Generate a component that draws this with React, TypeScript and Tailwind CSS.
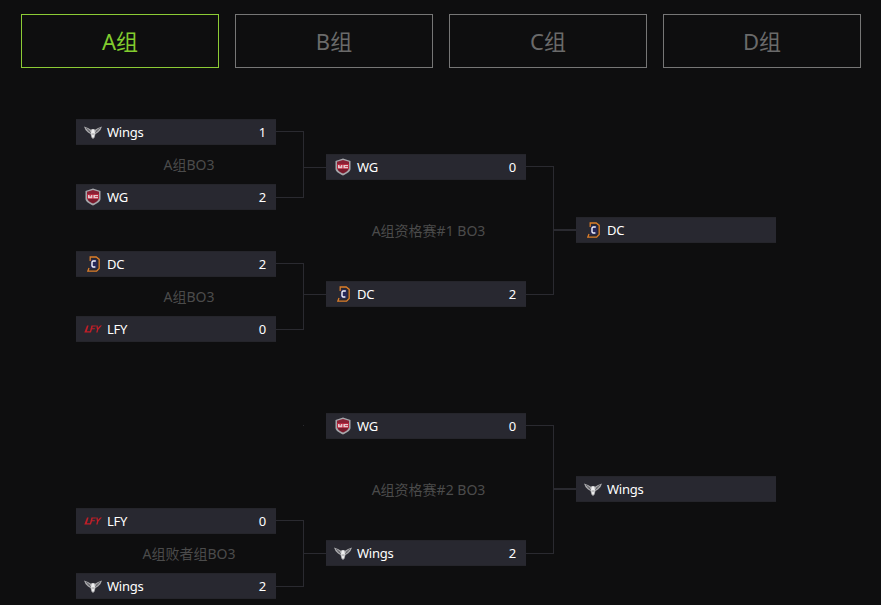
const FONT = "font-['Noto_Sans','Noto_Sans_CJK_SC',sans-serif]";

function WingsLogo() {
  return (
    <svg width="18" height="13" viewBox="0 0 18 13">
      <path d="M0 0.5 L4 2 L7 3.8 L8 3 H10 L11 3.8 L14 2 L18 0.5 L16.5 4 L14 6.5 L11.5 8 L10.6 11.5 L9 13 L7.4 11.5 L6.5 8 L4 6.5 L1.5 4 Z" fill="#a9a9ac" />
      <path d="M2 2 L6 5.2 M3.5 4 L6.8 6.6 M16 2 L12 5.2 M14.5 4 L11.2 6.6" stroke="#56565b" strokeWidth="0.8" fill="none" />
      <path d="M7.8 3.6 H10.2 L10.8 6.5 L10 10.5 L9 12 L8 10.5 L7.2 6.5 Z" fill="#efeff0" />
      <path d="M8.2 7.5 H9.8 L9 9.5 Z" fill="#77777b" />
    </svg>
  );
}

function WgLogo() {
  return (
    <svg width="16" height="18" viewBox="0 0 16 18">
      <path d="M0.5 3 L8 0.5 L15.5 3 V11 C15.5 14 11 16 8 17.5 C5 16 0.5 14 0.5 11 Z" fill="#a6a6aa" />
      <path d="M2 3.8 L8 1.9 L14 3.8 V6 H2 Z" fill="#8a2034" />
      <path d="M2 6 H14 V11 H2 Z" fill="#b9283f" />
      <path d="M2.4 11 H13.6 C13 13 10.2 14.6 8 15.6 C5.8 14.6 3 13 2.4 11 Z" fill="#7a1a2c" />
      <path d="M3 7 H7.4 V10.2 H3 Z M8.4 7 H13 V10.2 H8.4 Z" fill="#e6c9cf" />
      <path d="M4.6 7 H5.8 V8.6 H4.6 Z M10 8 H13 V8.8 H10 Z" fill="#b9283f" />
    </svg>
  );
}

function DcLogo() {
  return (
    <svg width="13" height="16" viewBox="0 0 13 16">
      <path d="M3.2 5 V1 H9.2 L12.2 3.4 V12.4 L9.6 15.2 H0.8 L2 12" fill="none" stroke="#dc7d28" strokeWidth="1.3" />
      <path d="M4 3.4 H9 L10.2 4.4 V11.4 L9 12.6 H3 Z" fill="#27275a" />
      <path d="M8.8 5 H6 L5 6 V10 L6 11 H8.4" fill="none" stroke="#f2f2fb" strokeWidth="1.4" />
    </svg>
  );
}

function LfyLogo() {
  return (
    <svg width="18" height="8" viewBox="0 0 18 8">
      <path d="M3 0.5 H4.6 L2.9 6.2 H6.4 L5.9 7.5 H0.3 Z" fill="#bf1f28" />
      <path d="M7.4 0.5 H12 L11.7 1.6 H8.7 L8.3 3.2 H11 L10.7 4.2 H8 L7 7.5 H5.6 Z" fill="#bf1f28" />
      <path d="M12.2 0.5 H13.6 L14 3 L16.2 0.5 H18 L14.4 4.6 L13.6 7.5 H12.2 L13 4.6 Z" fill="#bf1f28" />
    </svg>
  );
}

const logos: Record<string, () => React.ReactElement> = {
  Wings: WingsLogo,
  WG: WgLogo,
  DC: DcLogo,
  LFY: LfyLogo,
};

function TeamRow({ team, score }: { team: string; score?: number }) {
  const Logo = logos[team];
  return (
    <div className="flex h-[26px] w-[200px] items-center border-y border-[#25252b] bg-[#282830] pr-[10px] text-[13px] tracking-[-0.25px] text-white">
      <div className="flex w-[31px] shrink-0 items-center justify-center pl-[3px]">
        <Logo />
      </div>
      <span className="pt-[2px]">{team}</span>
      {score !== undefined && <span className="ml-auto pt-[2px]">{score}</span>}
    </div>
  );
}

function GroupTab({ name, active }: { name: string; active?: boolean }) {
  return (
    <div
      className={
        active
          ? "flex h-[54px] w-[198px] items-center justify-center border border-[#8ccb35] text-[22px] text-[#82cc2e]"
          : "flex h-[54px] w-[198px] items-center justify-center border border-[#767676] text-[22px] text-[#6a6a6a]"
      }
    >
      {name}
    </div>
  );
}

const line = "border-y border-r border-[#2a2a30]";

export default function App() {
  return (
    <div className={`h-[605px] w-[881px] overflow-hidden bg-[#0e0e0f] ${FONT}`}>
      <div className="flex gap-4 pl-[21px] pt-[14px]">
        <GroupTab name="A组" active />
        <GroupTab name="B组" />
        <GroupTab name="C组" />
        <GroupTab name="D组" />
      </div>

      {/* upper bracket */}
      <div className="ml-[76px] mt-[51px] flex items-start">
        <div className="flex w-[200px] flex-col">
          <TeamRow team="Wings" score={1} />
          <div className="flex h-[39px] items-center justify-center pl-[26px] text-sm text-[#4b4b4b]">A组BO3</div>
          <TeamRow team="WG" score={2} />
          <div className="h-[41px]" />
          <TeamRow team="DC" score={2} />
          <div className="flex h-[39px] items-center justify-center pl-[26px] text-sm text-[#4b4b4b]">A组BO3</div>
          <TeamRow team="LFY" score={0} />
        </div>
        <div className="flex w-[50px] flex-col pt-[12px]">
          <div className="flex items-start">
            <div className={`h-[67px] w-[28px] ${line}`} />
            <div className="mt-[36px] h-px w-[22px] bg-[#2a2a30]" />
          </div>
          <div className="mt-[65px] flex items-start">
            <div className={`h-[67px] w-[28px] ${line}`} />
            <div className="mt-[31px] h-px w-[22px] bg-[#2a2a30]" />
          </div>
        </div>
        <div className="mt-[35px] flex w-[200px] flex-col">
          <TeamRow team="WG" score={0} />
          <div className="flex h-[101px] items-center justify-center pl-[5px] text-sm text-[#4b4b4b]">A组资格赛#1 BO3</div>
          <TeamRow team="DC" score={2} />
        </div>
        <div className="mt-[47px] flex w-[50px] items-start">
          <div className={`h-[129px] w-[28px] ${line}`} />
          <div className="mt-[63px] h-[2px] w-[22px] bg-[#2a2a30]" />
        </div>
        <div className="mt-[98px]">
          <TeamRow team="DC" />
        </div>
      </div>

      {/* lower bracket */}
      <div className="ml-[76px] mt-[71px] flex items-start">
        <div className="mt-[95px] flex w-[200px] flex-col">
          <TeamRow team="LFY" score={0} />
          <div className="flex h-[39px] items-center justify-center pl-[26px] text-sm text-[#4b4b4b]">A组败者组BO3</div>
          <TeamRow team="Wings" score={2} />
        </div>
        <div className="flex w-[50px] flex-col pt-[12px]">
          <div className="ml-[27px] h-px w-px bg-[#2a2a30]" />
          <div className="mt-[94px] flex items-start">
            <div className={`h-[67px] w-[28px] ${line}`} />
            <div className="mt-[33px] h-px w-[22px] bg-[#2a2a30]" />
          </div>
        </div>
        <div className="flex w-[200px] flex-col">
          <TeamRow team="WG" score={0} />
          <div className="flex h-[101px] items-center justify-center pl-[5px] text-sm text-[#4b4b4b]">A组资格赛#2 BO3</div>
          <TeamRow team="Wings" score={2} />
        </div>
        <div className="mt-[12px] flex w-[50px] items-start">
          <div className={`h-[129px] w-[28px] ${line}`} />
          <div className="mt-[63px] h-[2px] w-[22px] bg-[#2a2a30]" />
        </div>
        <div className="mt-[63px]">
          <TeamRow team="Wings" />
        </div>
      </div>
    </div>
  );
}
